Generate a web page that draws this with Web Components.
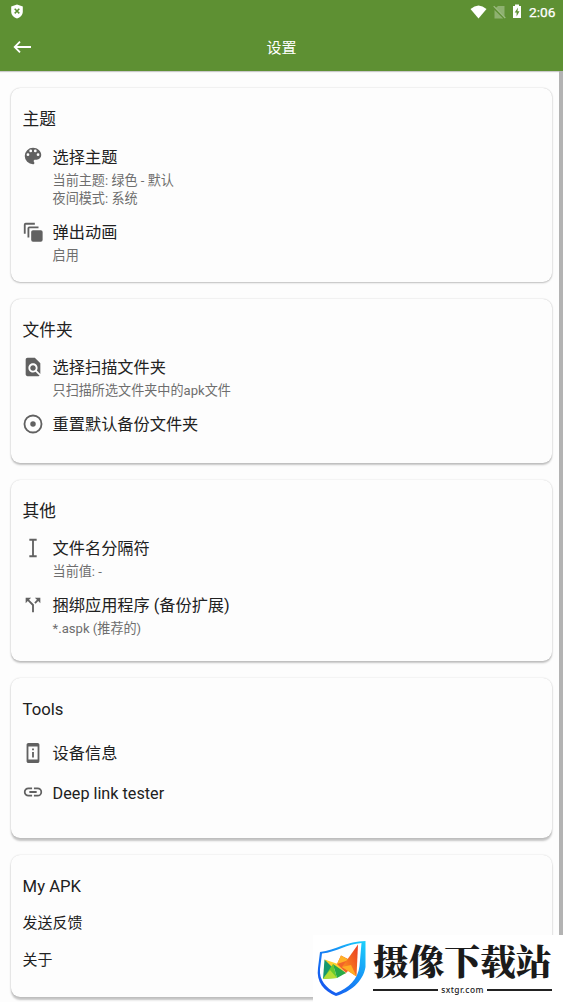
<!DOCTYPE html>
<html lang="zh-CN">
<head>
<meta charset="utf-8">
<title>设置</title>
<style>
html,body{margin:0;height:100%;overflow:hidden;background:#fdfdfd;font-family:Roboto,"Noto Sans CJK SC",sans-serif;color:#212121}
</style>
</head>
<body>
<settings-page></settings-page>
<script>
const ICONS={
palette:'<path d="M12 3a9 9 0 0 0 0 18c.83 0 1.500-.67 1.500-1.500 0-.39-.15-.74-.39-1.010-.23-.26-.38-.61-.38-.99 0-.83.67-1.500 1.500-1.500H16a5 5 0 0 0 5-5c0-4.420-4.030-8-9-8zM6.500 12a1.500 1.500 0 1 1 0-3 1.500 1.500 0 0 1 0 3zm3-4a1.500 1.500 0 1 1 0-3 1.500 1.500 0 0 1 0 3zm5 0a1.500 1.500 0 1 1 0-3 1.500 1.500 0 0 1 0 3zm3 4a1.500 1.500 0 1 1 0-3 1.500 1.500 0 0 1 0 3z"/>',
layers:'<path d="M2 14V4a2 2 0 0 1 2-2h10v2H4v10zM6 18V8a2 2 0 0 1 2-2h10v2H8v10z"/><rect x="10" y="10" width="12.500" height="12.500" rx="2"/>',
find:'<path d="M20 19.590V8l-6-6H6c-1.100 0-1.990.9-1.990 2L4 20c0 1.100.89 2 1.990 2H18c.45 0 .85-.15 1.190-.4l-4.430-4.430c-.8.52-1.740.83-2.760.83-2.760 0-5-2.240-5-5s2.240-5 5-5 5 2.240 5 5c0 1.020-.31 1.960-.83 2.750L20 19.590zM9 13c0 1.660 1.340 3 3 3s3-1.340 3-3-1.340-3-3-3-3 1.340-3 3z"/>',
target:'<circle cx="12" cy="12" r="9.300" fill="none" stroke="currentColor" stroke-width="2"/><circle cx="12" cy="12" r="3"/>',
cursor:'<path d="M8 2h8v2h-3v16h3v2H8v-2h3V4H8z"/>',
split:'<path d="M14 4l2.290 2.290-2.880 2.880 1.420 1.420 2.880-2.880L20 10V4zM10 4H4v6l2.290-2.290 4.710 4.700V20h2v-8.410l-5.290-5.300z"/>',
device:'<path d="M13 7h-2v2h2zM13 11h-2v6h2zM17 1H7c-1.100 0-2 .9-2 2v18c0 1.100.9 2 2 2h10c1.100 0 2-.9 2-2V3c0-1.100-.9-2-2-2zm0 18H7V5h10z"/>',
link:'<path d="M3.900 12c0-1.710 1.390-3.100 3.100-3.100h4V7H7a5 5 0 0 0 0 10h4v-1.900H7c-1.710 0-3.100-1.390-3.100-3.100zM8 13h8v-2H8zM17 7h-4v1.900h4a3.100 3.100 0 0 1 0 6.200h-4V17h4a5 5 0 0 0 0-10z"/>'
};

function define(name,markup,setup){
  customElements.define(name,class extends HTMLElement{
    constructor(){super();const r=this.attachShadow({mode:'open'});const t=document.createElement('template');t.innerHTML=markup;r.append(t.content.cloneNode(true));}
    connectedCallback(){if(setup)setup(this,this.shadowRoot);}
  });
}

define('status-bar',`<style>
:host{display:flex;align-items:center;height:24px;box-sizing:border-box;padding:0 7.500px 1px 10px;color:#fff}
svg{display:block}.grow{flex:1}.time{font-size:13.700px;line-height:22px;font-weight:400;-webkit-text-stroke:.25px #fff}
</style>
<svg width="14" height="15" viewBox="0 0 14 15"><path d="M7 .5 12.800 2.500V7.500C12.800 11 10.200 13.500 7 14.500 3.800 13.500 1.200 11 1.200 7.500V2.500z" fill="#fff"/><path d="M4.700 4.800l4.600 4.600M9.300 4.800L4.700 9.400" stroke="#5e9033" stroke-width="1.500"/></svg>
<span class="grow"></span>
<svg width="17" height="14" viewBox="0 0 17 14" style="margin-right:6px"><path d="M.5 4Q8.500-3 16.500 4L8.500 13.500z" fill="#fff"/></svg>
<svg width="13" height="14" viewBox="0 0 13 14" style="margin-right:6px"><path d="M5 1h6.500v10.200L3 2.700zM1.500 5v8.500h8.700z" fill="#fff" opacity=".3"/><path d="M.7 1.200 12.300 13" stroke="#fff" stroke-width="1.200" opacity=".4"/></svg>
<svg width="10" height="15" viewBox="0 0 10 15" style="margin-right:7px"><path d="M3 .5h4V2h2v12H1V2h2z" fill="#fff"/><path d="M6 3.500 2.700 8.500H4.600V12.500L7.500 7.200H5.500z" fill="#5e9033"/></svg>
<span class="time">2:06</span>`);

define('app-bar',`<style>
:host{display:grid;grid-template-columns:46px 1fr 46px;align-items:center;height:46px;color:#fff}
svg{display:block;margin-left:13px}.t{text-align:center;font-size:15px;line-height:24px;padding-top:1px}
</style><svg width="19" height="14" viewBox="0 0 19 14" fill="none" stroke="#fff" stroke-width="1.800"><path d="M1.700 7H18M7 1.700 1.700 7l5.300 5.300"/></svg><span class="t"><slot></slot></span><span></span>`);

define('setting-card',`<style>
:host{display:block;box-sizing:border-box;height:var(--h);padding:20px 12px 0 11.600px;border-radius:9px;background:#fdfdfd;box-shadow:0 0 1.500px rgba(0,0,0,.2),0 var(--y) 2px rgba(0,0,0,.22)}
h2{margin:0;font-size:16.700px;line-height:24px;height:23px;font-weight:400}
</style><h2></h2><slot></slot>`,(h,r)=>{r.querySelector('h2').textContent=h.getAttribute('heading');h.style.setProperty('--h',h.getAttribute('height')+'px');h.style.setProperty('--y',h.getAttribute('depth')+'px');});

define('setting-item',`<style>
:host{display:grid;grid-template-columns:30px 1fr;margin-top:var(--gap,14px)}
svg{display:block;width:22px;height:22px;margin-top:var(--icon,0px);margin-left:-.6px;fill:currentColor;color:#616161}
.label{font-size:16.200px;line-height:24px;padding-top:var(--drop,0px)}
.sub{margin-top:2px;font-size:13.100px;line-height:18px;color:#6e6e6e}
::slotted(div){height:18px}
</style><svg viewBox="0 0 24 24"></svg><div><div class="label"></div><div class="sub"><slot></slot></div></div>`,(h,r)=>{r.querySelector('svg').innerHTML=ICONS[h.getAttribute('icon')];r.querySelector('.label').textContent=h.getAttribute('label');});

define('plain-item',`<style>:host{display:block;margin-top:13px;font-size:15px;line-height:24px}</style><slot></slot>`);

define('site-badge',`<style>
:host{display:grid;grid-template-columns:58px 179px;align-items:start;box-sizing:border-box;width:250px;height:67px;background:#fff;padding-left:2px;color:#1b1b1b}
svg{display:block;margin-top:4px}.words{display:block;padding-top:3px;height:64px}
.name{font:900 35.700px/44px "Noto Serif CJK SC","Noto Sans CJK SC",serif;white-space:nowrap}
.row{display:flex;align-items:center;gap:3px;font:500 8.400px/12px "Noto Sans",sans-serif;letter-spacing:.45px;margin-top:2px}
i{height:2px;background:#222;flex:1}
</style>
<svg width="54" height="58" viewBox="0 0 54 58"><defs><linearGradient id="s" x1="0" y1="1" x2="1" y2="0"><stop stop-color="#1649ee"/><stop offset=".55" stop-color="#168bf5"/><stop offset="1" stop-color="#1cd2fb"/></linearGradient><linearGradient id="o" x1="0" y1="1" x2="1" y2="0"><stop stop-color="#ff9d20"/><stop offset="1" stop-color="#e93922"/></linearGradient></defs>
<path fill="url(#s)" fill-rule="evenodd" d="M5 13C21 11 32 2 50.500 2V28C48 43 35 53 21 57C9 52 1 43 3 29zM7 14.500L5 30C4 41 11 49 21 54C34 49 43 40 44.500 27L46.500 4C32 5 22 13 7 14.500z"/>
<path fill="#16986e" d="M9.500 20.500 8 40 19 26z"/><path fill="#ffcf2e" d="M9.500 20.500 23 25 31 35 18 29z"/><path fill="#f2652a" d="M26 16.500 35 21 33 32 31 34 22 25z"/><path fill="#ffb327" d="M26 16.500 34 21 22 25z"/><path fill="url(#o)" d="M43 5.500 41.500 37.500 27 28z"/><path fill="#ffad24" d="M27 28 36 26 41.500 37.500z"/><path fill="#67ca2e" d="M18 25 8 40 22 39z"/><path fill="#27a947" d="M18 25 31 34 22 39z"/><path fill="#b5dc36" d="M8 40 15 31 22 39z"/></svg>
<span class="words"><span class="name">摄像下载站</span><span class="row"><i></i>sxtgr.com<i></i></span></span>`);

define('settings-page',`<style>
:host{display:flex;flex-direction:column;height:1002px;width:563px;position:relative;overflow:hidden}
header{flex:none;background:#5e9033;height:71px;box-shadow:0 1px 1px rgba(0,0,0,.2)}
main{display:grid;grid-template-columns:1fr 4px;flex:1;min-height:0}
.list{display:flex;flex-direction:column;gap:17px;padding:17px 7px 0 11px}
.bar{background:#b3b3b3}
site-badge{position:absolute;left:313px;top:935px}
</style>
<header><status-bar></status-bar><app-bar>设置</app-bar></header>
<main><div class="list">
<setting-card heading="主题" height="194" depth="1"><setting-item icon="palette" label="选择主题" style="--drop:1px"><div>当前主题: 绿色 - 默认</div><div>夜间模式: 系统</div></setting-item><setting-item icon="layers" label="弹出动画" style="--gap:12.500px"><div>启用</div></setting-item></setting-card>
<setting-card heading="文件夹" height="164" depth="1.300"><setting-item icon="find" label="选择扫描文件夹"><div>只扫描所选文件夹中的apk文件</div></setting-item><setting-item icon="target" label="重置默认备份文件夹" style="--gap:13px"></setting-item></setting-card>
<setting-card heading="其他" height="181" depth="2"><setting-item icon="cursor" label="文件名分隔符"><div>当前值: -</div></setting-item><setting-item icon="split" label="捆绑应用程序 (备份扩展)" style="--gap:12.500px"><div>*.aspk (推荐的)</div></setting-item></setting-card>
<setting-card heading="Tools" height="160" depth="2.500"><setting-item icon="device" label="设备信息" style="--gap:21px"></setting-item><setting-item icon="link" label="Deep link tester" style="--gap:14px;--icon:-1px"></setting-item></setting-card>
<setting-card heading="My APK" height="142" depth="3"><plain-item>发送反馈</plain-item><plain-item>关于</plain-item></setting-card>
</div><div class="bar"></div></main>
<site-badge></site-badge>`);
</script>
</body>
</html>
